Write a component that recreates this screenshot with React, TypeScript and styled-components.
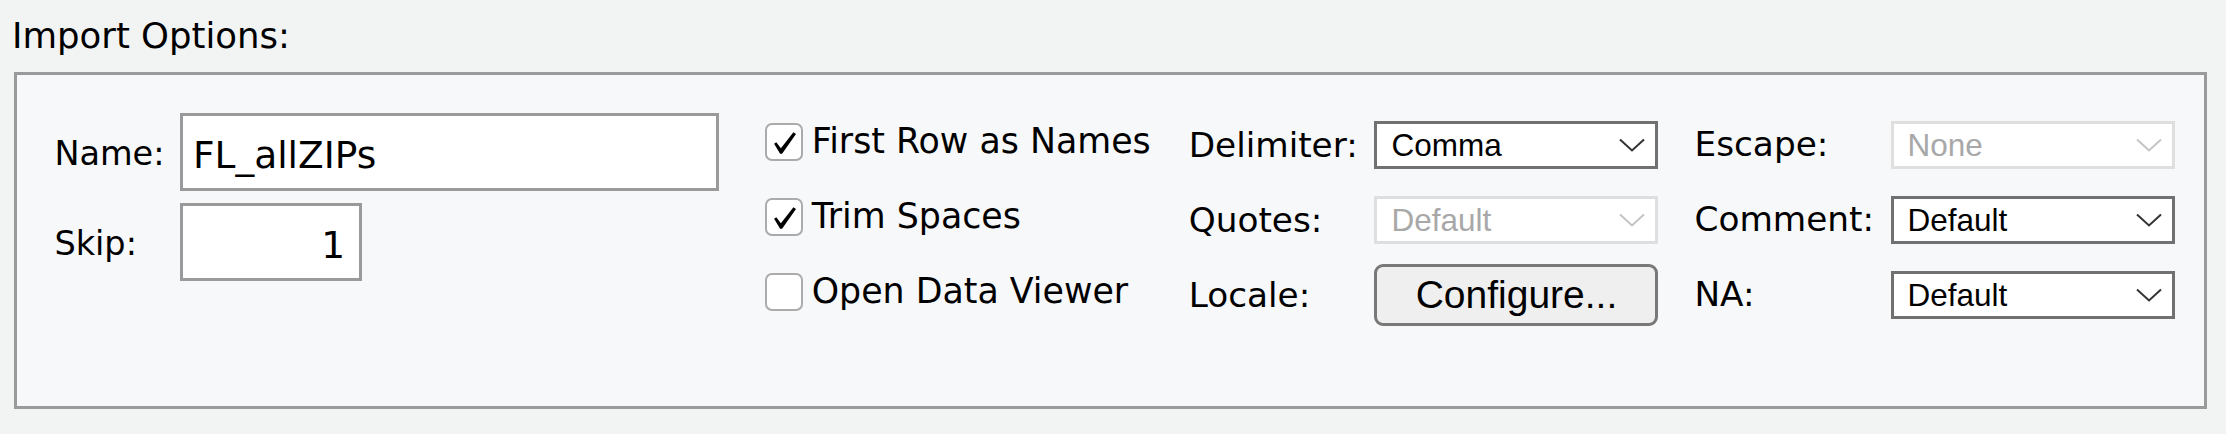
import React from "react";
import styled, { createGlobalStyle } from "styled-components";

const Global = createGlobalStyle`
  html, body { margin: 0; padding: 0; background: #f2f3f3; }
  body { width: 2226px; height: 434px; overflow: hidden; }
`;

const Page = styled.div`
  padding: 15px 19px 0 14px;
  font-family: "DejaVu Sans", "Lucida Grande", sans-serif;
  color: #000;
`;

const Title = styled.div`
  font-size: 35.5px;
  line-height: 41px;
  margin: 0 0 16px -2px;
`;

const Panel = styled.section`
  box-sizing: border-box;
  height: 337px;
  border: 3px solid #9a9a9a;
  background: #f7f8f9;
  display: grid;
  grid-template-columns: 710.6px 423.7px 505.8px 1fr;
  align-items: start;
  padding-left: 37.4px;
`;

const FieldGrid = styled.div<{ $top: number; $label: number; $rows: number; $gap?: number }>`
  display: grid;
  grid-template-columns: ${(p) => p.$label}px auto;
  grid-auto-rows: ${(p) => p.$rows}px;
  row-gap: ${(p) => p.$gap ?? 0}px;
  align-items: center;
  justify-items: start;
  padding-top: ${(p) => p.$top}px;
`;

const Label = styled.span<{ $size: number; $shift: number }>`
  font-size: ${(p) => p.$size}px;
  line-height: 1.2;
  padding-top: ${(p) => p.$shift}px;
  white-space: nowrap;
`;

const TextInput = styled.input<{ $w: number; $align?: string }>`
  box-sizing: border-box;
  width: ${(p) => p.$w}px;
  height: 78px;
  border: 3px solid #9a9a9a;
  border-radius: 0;
  background: #fff;
  outline: none;
  margin: 0;
  padding: 6px 14px 0 10px;
  font-family: "DejaVu Sans", "Lucida Grande", sans-serif;
  font-size: 37.5px;
  color: #000;
  text-align: ${(p) => p.$align ?? "left"};
`;

const CheckList = styled.div`
  display: grid;
  grid-auto-rows: 75px;
  align-items: center;
  padding-top: 29px;
`;

const CheckRow = styled.label`
  display: flex;
  align-items: center;
  gap: 8.7px;
  font-size: 34.8px;
  line-height: 1.2;
  white-space: nowrap;
`;

const Box = styled.span`
  box-sizing: border-box;
  width: 38px;
  height: 38px;
  flex: none;
  border: 2px solid #ababab;
  border-radius: 7px;
  background: #fff;
  display: flex;
`;

const Select = styled.div<{ $disabled?: boolean }>`
  box-sizing: border-box;
  width: 284px;
  height: 48px;
  border: 3px solid ${(p) => (p.$disabled ? "#dfdfdf" : "#717171")};
  background: #fff;
  display: flex;
  align-items: center;
  justify-content: space-between;
  padding: 0 10px 0 14px;
  font-family: "Liberation Sans", Arial, sans-serif;
  font-size: 31.5px;
  color: ${(p) => (p.$disabled ? "#a8a8a8" : "#000")};
`;

const Button = styled.button`
  box-sizing: border-box;
  width: 284px;
  height: 62px;
  border: 3px solid #787878;
  border-radius: 9px;
  background: #efefef;
  margin: 0;
  padding: 0;
  font-family: "Liberation Sans", Arial, sans-serif;
  font-size: 39px;
  color: #000;
`;

const Check = () => (
  <svg width="34" height="34" viewBox="0 0 34 34">
    <path d="M7.1 18.7 L9.3 17.3 L13.9 23.3 L26.4 7.2 L29 8.9 L15.1 28.8 L13.1 28.8 Z" fill="#000" />
  </svg>
);

const Chevron = ({ color }: { color: string }) => (
  <svg width="26" height="14" viewBox="0 0 26 14">
    <polyline points="1,1.5 13,12.5 25,1.5" fill="none" stroke={color} strokeWidth="2" />
  </svg>
);

const Checkbox = ({ checked, text }: { checked: boolean; text: string }) => (
  <CheckRow>
    <Box>{checked && <Check />}</Box>
    {text}
  </CheckRow>
);

const Dropdown = ({ value, disabled }: { value: string; disabled?: boolean }) => (
  <Select $disabled={disabled} role="combobox" aria-disabled={disabled}>
    <span>{value}</span>
    <Chevron color={disabled ? "#c4c4c4" : "#333"} />
  </Select>
);

export default function App() {
  return (
    <Page>
      <Global />
      <Title>Import Options:</Title>
      <Panel>
        <FieldGrid $top={38} $label={125.6} $rows={78} $gap={12}>
          <Label $size={33.5} $shift={4}>Name:</Label>
          <TextInput $w={539} defaultValue="FL_allZIPs" />
          <Label $size={33.5} $shift={4}>Skip:</Label>
          <TextInput $w={182} $align="right" defaultValue="1" />
        </FieldGrid>
        <CheckList>
          <Checkbox checked text="First Row as Names" />
          <Checkbox checked text="Trim Spaces" />
          <Checkbox checked={false} text="Open Data Viewer" />
        </CheckList>
        <FieldGrid $top={32.5} $label={185.8} $rows={75}>
          <Label $size={34.3} $shift={2}>Delimiter:</Label>
          <Dropdown value="Comma" />
          <Label $size={34.3} $shift={2}>Quotes:</Label>
          <Dropdown value="Default" disabled />
          <Label $size={34.3} $shift={2}>Locale:</Label>
          <Button>Configure...</Button>
        </FieldGrid>
        <FieldGrid $top={32.5} $label={196.1} $rows={75}>
          <Label $size={34.3} $shift={0}>Escape:</Label>
          <Dropdown value="None" disabled />
          <Label $size={34.3} $shift={0}>Comment:</Label>
          <Dropdown value="Default" />
          <Label $size={34.3} $shift={0}>NA:</Label>
          <Dropdown value="Default" />
        </FieldGrid>
      </Panel>
    </Page>
  );
}
